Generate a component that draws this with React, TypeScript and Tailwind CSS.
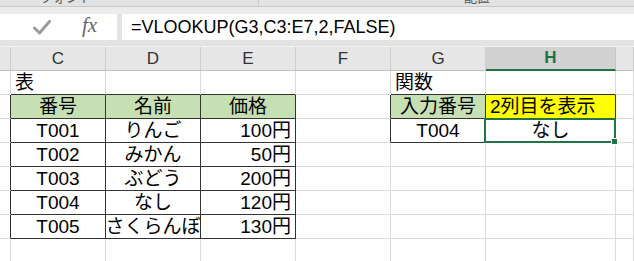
import React from "react";

type Align = "left" | "center" | "right";

type CellSpec = {
  text?: string;
  align?: Align;
  bg?: string;
  darkR?: boolean;
  darkB?: boolean;
  selected?: boolean;
};

const COLS = ["B", "C", "D", "E", "F", "G", "H", "I"];

const gridCols = "grid grid-cols-[11px_95px_95px_95px_95px_95px_130px_1fr]";

function Cell({ spec }: { spec: CellSpec }) {
  const alignCls =
    spec.align === "center"
      ? "justify-center"
      : spec.align === "right"
      ? "justify-end pr-[4px]"
      : "justify-start pl-[4px]";
  const bgCls =
    spec.bg === "green" ? "bg-[#c6e0b4]" : spec.bg === "yellow" ? "bg-[#ffff00]" : "bg-white";
  const rCls = spec.darkR ? "border-r-[#333333]" : "border-r-[#dadada]";
  const bCls = spec.darkB ? "border-b-[#333333]" : "border-b-[#dadada]";
  return (
    <div
      className={`relative h-[24px] flex items-center border-r border-b ${rCls} ${bCls} ${bgCls} ${alignCls} whitespace-nowrap overflow-visible`}
    >
      {spec.text && <span className="leading-none text-black">{spec.text}</span>}
      {spec.selected && (
        <div className="absolute z-10 -left-[2px] -top-[1px] -right-[1px] -bottom-[1px] border-2 border-[#217346] pointer-events-none">
          <div className="absolute -right-[4px] -bottom-[4px] w-[7px] h-[7px] bg-[#217346] border border-white" />
        </div>
      )}
    </div>
  );
}

// Sheet content, one array per row, columns B..I
function buildRows(): CellSpec[][] {
  const empty = (): CellSpec[] => COLS.map(() => ({}));
  const rows: CellSpec[][] = [];

  // title row
  const r0 = empty();
  r0[1] = { text: "表", align: "left", darkB: true };
  r0[2] = { darkB: true };
  r0[3] = { darkB: true };
  r0[5] = { text: "関数", align: "left", darkB: true };
  r0[6] = { darkB: true };
  rows.push(r0);

  const products: [string, string, string][] = [
    ["番号", "名前", "価格"],
    ["T001", "りんご", "100円"],
    ["T002", "みかん", "50円"],
    ["T003", "ぶどう", "200円"],
    ["T004", "なし", "120円"],
    ["T005", "さくらんぼ", "130円"],
  ];

  products.forEach((p, i) => {
    const r = empty();
    const head = i === 0;
    r[0] = { darkR: true };
    r[1] = { text: p[0], align: "center", bg: head ? "green" : undefined, darkR: true, darkB: true };
    r[2] = { text: p[1], align: "center", bg: head ? "green" : undefined, darkR: true, darkB: true };
    r[3] = { text: p[2], align: head ? "center" : "right", bg: head ? "green" : undefined, darkR: true, darkB: true };
    if (i === 0) {
      r[4] = { darkR: true };
      r[5] = { text: "入力番号", align: "center", bg: "green", darkR: true, darkB: true };
      r[6] = { text: "2列目を表示", align: "left", bg: "yellow", darkR: true, darkB: true };
    } else if (i === 1) {
      r[4] = { darkR: true };
      r[5] = { text: "T004", align: "center", darkR: true, darkB: true };
      r[6] = { text: "なし", align: "center", darkR: true, darkB: true, selected: true };
    }
    rows.push(r);
  });

  rows.push(empty());
  return rows;
}

export default function App() {
  const rows = buildRows();
  return (
    <div className="w-[634px] h-[261px] overflow-hidden bg-[#e6e6e6] flex flex-col font-['Liberation_Sans','Noto_Sans_CJK_JP',sans-serif]">
      {/* ribbon group labels, bottom edge only */}
      <div className="h-[6px] overflow-hidden bg-[#e3e3e3] relative flex shrink-0">
        <span className="absolute left-[40px] -top-[9px] text-[13px] leading-none text-[#555]">フォント</span>
        <div className="absolute left-[258px] top-0 h-[6px] w-px bg-[#c8c8c8]" />
        <span className="absolute left-[464px] -top-[9px] text-[13px] leading-none text-[#555]">配置</span>
      </div>
      <div className="h-px bg-[#c6c6c6] shrink-0" />
      <div className="h-[7px] bg-[#ececec] shrink-0" />

      {/* formula bar */}
      <div className="h-[26px] flex shrink-0 bg-[#e3e3e3]">
        <div className="w-[117px] bg-white relative flex items-center">
          <svg className="absolute left-[33px] top-[6px]" width="18" height="15" viewBox="0 0 18 15">
            <path d="M1.5 8 L6.5 13 L16.5 1.5" fill="none" stroke="#9c9c9c" strokeWidth="3" strokeLinecap="round" strokeLinejoin="round" />
          </svg>
          <span className="absolute left-[82px] top-[1px] font-['Liberation_Serif',serif] italic text-[21px] leading-none text-[#666]">
            fx
          </span>
        </div>
        <div className="w-[5px]" />
        <div className="flex-1 bg-white flex items-center pl-[9px]">
          <span className="text-[18px] leading-none text-black">=VLOOKUP(G3,C3:E7,2,FALSE)</span>
        </div>
      </div>

      <div className="h-[6px] bg-[#e3e3e3] shrink-0" />
      <div className="h-px bg-[#f2f2f2] shrink-0" />

      {/* column headers */}
      <div className={`${gridCols} h-[24px] shrink-0`}>
        {COLS.map((c) =>
          c === "H" ? (
            <div
              key={c}
              className="h-[24px] flex items-center justify-center bg-[#d2d2d2] border-r border-r-[#c4c4c4] border-b-2 border-b-[#217346] text-[17px] font-bold text-[#217346]"
            >
              {c}
            </div>
          ) : (
            <div
              key={c}
              className="h-[24px] flex items-center justify-center bg-[#e6e6e6] border-r border-r-[#cdcdcd] border-b border-b-[#c0c0c0] text-[17px] text-[#333]"
            >
              {c === "B" || c === "I" ? "" : c}
            </div>
          )
        )}
      </div>

      {/* cells */}
      <div className="bg-white flex-1 text-[19px]">
        {rows.map((r, ri) => (
          <div key={ri} className={gridCols}>
            {r.map((spec, ci) => (
              <Cell key={ci} spec={spec} />
            ))}
          </div>
        ))}
      </div>
    </div>
  );
}
